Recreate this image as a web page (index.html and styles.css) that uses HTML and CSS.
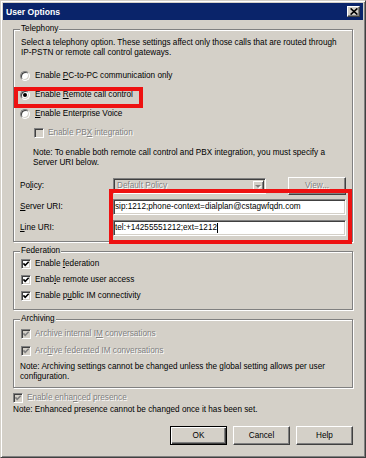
FILE: index.html
```html
<!DOCTYPE html>
<html lang="en">
<head>
    <meta charset="UTF-8">
    <meta name="viewport" content="width=device-width, initial-scale=1.0">
    <title>User Options</title>
    <link rel="stylesheet" href="styles.css">
</head>
<body>
    <div class="window">
        <div class="titlebar">
            <span class="title">User Options</span>
            <span class="close-btn">
                <svg width="8" height="7" viewBox="0 0 8 7"><path d="M0.6 0.4 L7.4 6.6 M7.4 0.4 L0.6 6.6" stroke="#000" stroke-width="1.6" fill="none"/></svg>
            </span>
        </div>

        <div class="content">
            <!-- Telephony -->
            <div class="group telephony">
                <span class="group-title">Telephony</span>
                <p class="desc">Select a telephony option. These settings affect only those calls that are routed through<br>IP-PSTN or remote call control gateways.</p>

                <div class="options">
                    <div class="row"><span class="radio"></span><span>Enable <u>P</u>C-to-PC communication only</span></div>
                    <div class="row"><span class="radio checked"></span><span>Enable <u>R</u>emote call control</span></div>
                    <div class="row"><span class="radio"></span><span><u>E</u>nable Enterprise Voice</span></div>
                    <div class="row sub disabled"><span class="check"></span><span>Enable PB<u>X</u> integration</span></div>
                </div>

                <p class="note indent">Note: To enable both remote call control and PBX integration, you must specify a<br>Server URI below.</p>

                <div class="fields">
                    <span class="field-label">Po<u>l</u>icy:</span>
                    <div class="combo-row">
                        <div class="combo">
                            <span class="combo-text">Default Policy</span>
                            <span class="combo-btn">
                                <svg width="7" height="5" viewBox="0 0 7 5"><path d="M1 2 L7 2 L4 5 Z" fill="#fff"/><path d="M0 1 L6 1 L3 4 Z" fill="#808080"/></svg>
                            </span>
                        </div>
                        <span class="btn view-btn">View...</span>
                    </div>

                    <span class="field-label"><u>S</u>erver URI:</span>
                    <div class="textbox">sip:1212;phone-context=dialplan@cstagwfqdn.com</div>

                    <span class="field-label"><u>L</u>ine URI:</span>
                    <div class="textbox">tel:+14255551212;ext=1212<span class="caret"></span></div>
                </div>
            </div>

            <!-- Federation -->
            <div class="group federation">
                <span class="group-title">Federation</span>
                <div class="row"><span class="check"><svg viewBox="0 0 8 8"><path d="M1.4 3.4 L3.2 5.3 L6.7 1.8"/></svg></span><span>Enable <u>f</u>ederation</span></div>
                <div class="row"><span class="check"><svg viewBox="0 0 8 8"><path d="M1.4 3.4 L3.2 5.3 L6.7 1.8"/></svg></span><span>Enab<u>l</u>e remote user access</span></div>
                <div class="row"><span class="check"><svg viewBox="0 0 8 8"><path d="M1.4 3.4 L3.2 5.3 L6.7 1.8"/></svg></span><span>Enable p<u>u</u>blic IM connectivity</span></div>
            </div>

            <!-- Archiving -->
            <div class="group archiving">
                <span class="group-title">Archiving</span>
                <div class="checks">
                    <div class="row disabled"><span class="check"><svg viewBox="0 0 8 8"><path d="M1.4 3.4 L3.2 5.3 L6.7 1.8"/></svg></span><span>Archive internal I<u>M</u> conversations</span></div>
                    <div class="row disabled"><span class="check"><svg viewBox="0 0 8 8"><path d="M1.4 3.4 L3.2 5.3 L6.7 1.8"/></svg></span><span>Arc<u>h</u>ive federated IM conversations</span></div>
                </div>
                <p class="note">Note: Archiving settings cannot be changed unless the global setting allows per user<br>configuration.</p>
            </div>

            <div class="row presence disabled"><span class="check"><svg viewBox="0 0 8 8"><path d="M1.4 3.4 L3.2 5.3 L6.7 1.8"/></svg></span><span>Enable enha<u>n</u>ced presence</span></div>
            <p class="note plain">Note: Enhanced presence cannot be changed once it has been set.</p>

            <div class="footer">
                <span class="btn default">OK</span>
                <span class="btn">Cancel</span>
                <span class="btn">Help</span>
            </div>
        </div>

        <!-- red highlight boxes from the screenshot -->
        <div class="callout callout-radio"></div>
        <div class="callout callout-uri"></div>
    </div>
</body>
</html>
```

FILE: styles.css
```css
* {
    box-sizing: border-box;
}

body {
    margin: 0;
    background: #d4d0c8;
    font-family: "Liberation Sans", Arial, sans-serif;
    font-size: 8.2px;
    line-height: 10px;
    color: #000;
}

p {
    margin: 0;
}

u {
    text-underline-offset: 1px;
}

/* Window frame */
.window {
    position: relative;
    width: 366px;
    height: 458px;
    padding: 2px;
    border: 1px solid;
    border-color: #d4d0c8 #404040 #404040 #d4d0c8;
    box-shadow: inset 1px 1px #fff, inset -1px -1px #808080;
    background: #d4d0c8;
}

.titlebar {
    height: 17px;
    background: #0a246a;
    display: flex;
    align-items: center;
    justify-content: space-between;
    padding: 0 3px;
}

.title {
    color: #fff;
    font-weight: bold;
    font-size: 8.6px;
}

.close-btn {
    width: 13px;
    height: 11px;
    background: #d4d0c8;
    border: 1px solid;
    border-color: #fff #404040 #404040 #fff;
    box-shadow: inset -1px -1px #808080;
    display: flex;
    align-items: center;
    justify-content: center;
}

.content {
    padding: 9px 10px 0;
}

/* Group boxes */
.group {
    border: 1px solid #808080;
    box-shadow: inset 1px 1px #fff, 1px 1px #fff;
    padding: 0 6px 5px 7px;
}

.group + .group {
    margin-top: 9px;
}

.group-title {
    display: table;
    margin: -6px 0 0 -1px;
    padding: 0 1px;
    background: #d4d0c8;
}

.desc {
    margin-top: 4px;
    white-space: nowrap;
}

.options {
    margin-top: 8px;
}

.row {
    height: 19px;
    display: flex;
    align-items: center;
    white-space: nowrap;
}

.row.sub {
    padding-left: 13px;
}

.disabled,
.btn.view-btn,
.combo-text {
    color: #808080;
    text-shadow: 1px 1px 0 #fff;
}

/* Radio and check boxes */
.radio {
    flex: none;
    position: relative;
    width: 10px;
    height: 10px;
    margin: 0 5px 0 -1px;
    border-radius: 50%;
    background: #fff;
    border: 1px solid;
    border-color: #808080 #fff #fff #808080;
    box-shadow: inset 1px 1px #404040, inset -1px -1px #d4d0c8;
}

.radio.checked::after {
    content: "";
    position: absolute;
    left: 2px;
    top: 2px;
    width: 4px;
    height: 4px;
    border-radius: 50%;
    background: #000;
}

.check {
    flex: none;
    width: 10px;
    height: 10px;
    margin-right: 4px;
    background: #fff;
    border: 1px solid;
    border-color: #808080 #fff #fff #808080;
    box-shadow: inset 1px 1px #404040, inset -1px -1px #d4d0c8;
    display: flex;
}

.check svg {
    width: 8px;
    height: 8px;
}

.check path {
    fill: none;
    stroke: #000;
    stroke-width: 1.6;
}

.disabled .check {
    background: #d4d0c8;
}

.disabled .check path {
    stroke: #808080;
}

.note {
    white-space: nowrap;
}

.note.indent {
    margin: 6px 0 0 12px;
}

/* Policy / URI fields */
.fields {
    margin-top: 10px;
    display: grid;
    grid-template-columns: 92px 1fr;
    grid-auto-rows: 16px;
    row-gap: 5px;
    align-items: center;
}

.field-label {
    margin-left: -1px;
}

.combo-row {
    height: 16px;
    display: flex;
    align-items: center;
    justify-content: space-between;
}

.combo {
    width: 153px;
    height: 16px;
    display: flex;
    align-items: center;
    padding-left: 3px;
    background: #d4d0c8;
    border: 1px solid;
    border-color: #808080 #fff #fff #808080;
    box-shadow: inset 1px 1px #404040, inset -1px -1px #d4d0c8;
}

.combo-btn {
    margin-left: auto;
    margin-right: 1px;
    width: 12px;
    height: 12px;
    border: 1px solid;
    border-color: #d4d0c8 #404040 #404040 #d4d0c8;
    box-shadow: inset 1px 1px #fff, inset -1px -1px #808080;
    display: flex;
    align-items: center;
    justify-content: center;
}

.textbox {
    height: 16px;
    display: flex;
    align-items: center;
    padding: 0 1px;
    background: #fff;
    white-space: nowrap;
    overflow: hidden;
    border: 1px solid;
    border-color: #808080 #fff #fff #808080;
    box-shadow: inset 1px 1px #404040, inset -1px -1px #d4d0c8;
}

.caret {
    width: 1px;
    height: 10px;
    background: #000;
}

/* Federation / Archiving */
.federation .row {
    height: 16px;
}

.archiving .checks {
    margin-top: 1px;
}

.archiving .row {
    height: 17px;
}

.archiving .note {
    margin: 3px 0 0 -1px;
}

.row.presence {
    height: 14px;
    margin-top: 3px;
}

/* Buttons */
.footer {
    margin-top: 11px;
    display: flex;
    justify-content: flex-end;
    gap: 6px;
}

.btn {
    width: 57px;
    height: 19px;
    display: flex;
    align-items: center;
    justify-content: center;
    background: #d4d0c8;
    border: 1px solid;
    border-color: #fff #404040 #404040 #fff;
    box-shadow: inset -1px -1px #808080;
}

.btn.default {
    border-color: #000;
    box-shadow: inset 1px 1px #fff, inset -1px -1px #404040, inset -2px -2px #808080;
}

.btn.view-btn {
    width: 58px;
    height: 18px;
}

/* Red annotation frames */
.callout {
    position: absolute;
    border: 4px solid #ee1111;
}

.callout-radio {
    left: 13px;
    top: 86px;
    width: 129px;
    height: 21px;
}

.callout-uri {
    left: 108px;
    top: 188px;
    width: 243px;
    height: 55px;
}
```
